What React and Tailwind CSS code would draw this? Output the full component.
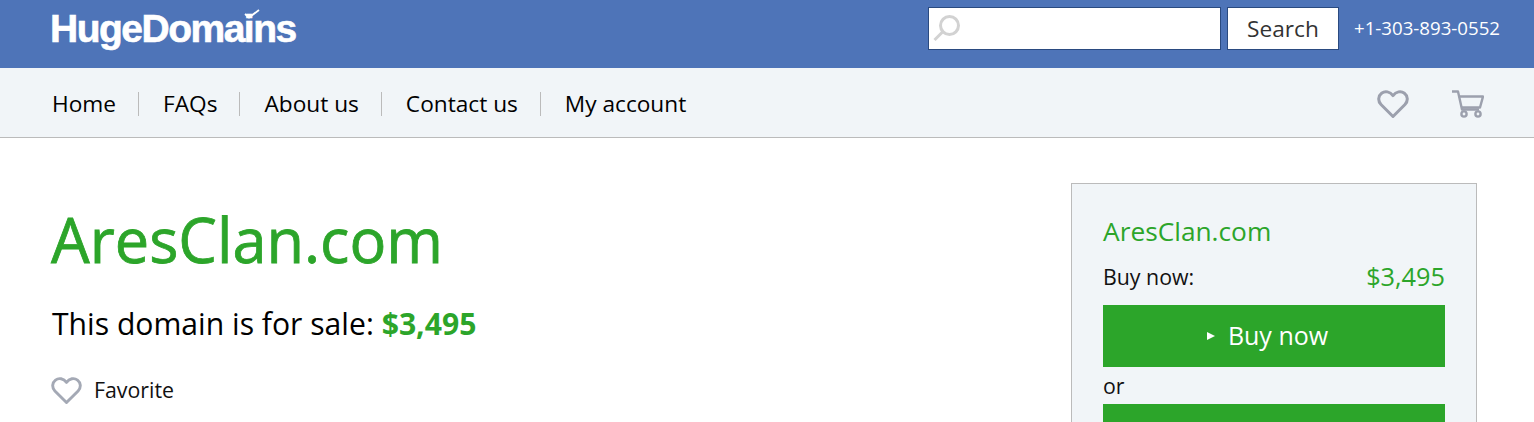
const font = { fontFamily: '"Open Sans", sans-serif' };

const Heart = ({ className }) => (
  <svg viewBox="0 0 32 30" className={className} fill="none" stroke="currentColor" strokeWidth="3" strokeLinejoin="round">
    <path d="M16 27.5 4 15.5C.6 12 1.2 6.8 4.6 4.2 8 1.6 13 2.4 16 6.6 19 2.4 24 1.6 27.4 4.2c3.4 2.6 4 7.8.6 11.3Z" />
  </svg>
);

const Cart = ({ className }) => (
  <svg viewBox="0 0 32 28" className={className} fill="none" stroke="currentColor" strokeWidth="2.4" strokeLinejoin="round">
    <path d="M0 1.5h6l4 18h17" />
    <path d="M7 6.5h24l-3 11H10" />
    <circle cx="12" cy="24" r="2.6" />
    <circle cx="26" cy="24" r="2.6" />
  </svg>
);

const SearchIcon = () => (
  <svg viewBox="0 0 28 30" className="w-[28px] h-[30px] text-[#d2d2d2]" fill="none" stroke="currentColor">
    <circle cx="16.5" cy="11.5" r="9" strokeWidth="3" />
    <path d="M9.5 18 1.5 26" strokeWidth="3" />
  </svg>
);

const navItems = ["Home", "FAQs", "About us", "Contact us", "My account"];

export default function App() {
  return (
    <div className="h-screen overflow-hidden bg-white text-[#111]" style={font}>
      <header className="h-[68px] bg-[#4e74b8] flex items-start justify-between pl-[50px] pr-[34px]">
        <div className="relative mt-[7px] text-white font-bold text-[39px] leading-[44px] tracking-[-1.5px] [-webkit-text-stroke:0.6px_white]" style={{ fontFamily: '"Liberation Sans", sans-serif' }}>
          HugeDomains
          <svg viewBox="0 0 16 10" className="absolute left-[194px] top-[2px] w-[16px] h-[10px] text-white" fill="none" stroke="currentColor" strokeWidth="1.8">
            <path d="M1 5l4 3.5L15 1" />
          </svg>
        </div>
        <div className="flex items-center mt-[7px]">
          <div className="w-[293px] h-[43px] bg-white border border-[#2a4a80] flex items-center pl-[4px]">
            <SearchIcon />
          </div>
          <button className="ml-[6px] w-[112px] h-[43px] bg-white border border-[#2a4a80] text-[22.67px] text-[#333] flex items-center justify-center">
            Search
          </button>
          <span className="ml-[15px] mb-[2px] text-white text-[18.67px] leading-[41px]">+1-303-893-0552</span>
        </div>
      </header>

      <nav className="h-[70px] pt-[2px] bg-[#f1f5f8] border-b border-[#bbb] flex items-center justify-between pl-[52px] pr-[50px]">
        <ul className="flex items-center">
          {navItems.map((item, i) => (
            <li key={item} className={i > 0 ? "ml-[22px] pl-[24px] border-l border-[#bbb] leading-[24px] text-[22.67px] text-black" : "leading-[24px] text-[22.67px] text-black"}>
              {item}
            </li>
          ))}
        </ul>
        <div className="flex items-center gap-[43px] text-[#9ca0ad]">
          <Heart className="w-[32px] h-[30px]" />
          <Cart className="w-[32px] h-[28px]" />
        </div>
      </nav>

      <main className="flex justify-between pl-[51px] pr-[57px]">
        <section>
          <h1 className="mt-[58px] text-[61.25px] font-medium leading-[88px] text-[#2ca52a] [-webkit-text-stroke:0.8px_#2ca52a]">AresClan.com</h1>
          <p className="mt-[20px] pl-[1px] text-[30.15px] leading-[40px] text-black">
            This domain is for sale: <strong className="font-bold text-[#2ca52a]">$3,495</strong>
          </p>
          <div className="mt-[31px] flex items-center">
            <Heart className="w-[31px] h-[29px] text-[#a4a9b5]" />
            <span className="ml-[12px] text-[21.33px] leading-[30px]">Favorite</span>
          </div>
        </section>

        <aside className="mt-[45px] w-[406px] h-[300px] bg-[#f1f5f8] border border-[#bbb] px-[31px] pt-[27px]">
          <div className="text-[26.3px] leading-[40px] text-[#2ca52a]">AresClan.com</div>
          <div className="mt-[7px] flex items-center justify-between leading-[36px]">
            <span className="text-[21.33px]">Buy now:</span>
            <span className="text-[25.3px] text-[#2ca52a] mb-[2px]">$3,495</span>
          </div>
          <button className="mt-[9px] w-full h-[62px] pr-[13px] bg-[#2ca52a] text-white text-[25px] flex items-center justify-center">
            <span className="w-0 h-0 border-y-[4px] border-y-transparent border-l-[8px] border-l-white mr-[13px]" />
            Buy now
          </button>
          <div className="text-[21.33px] leading-[37px]">or</div>
          <div className="h-[62px] bg-[#2ca52a]" />
        </aside>
      </main>
    </div>
  );
}
